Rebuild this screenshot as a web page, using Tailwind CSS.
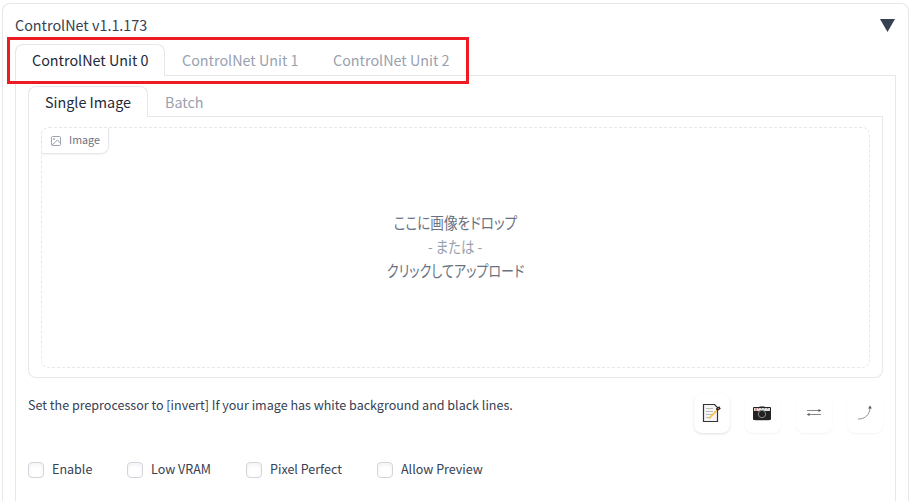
<!DOCTYPE html>
<html lang="ja">
<head>
<meta charset="utf-8">
<title>ControlNet</title>
<script src="https://cdn.jsdelivr.net/npm/@tailwindcss/browser@4"></script>
</head>
<body class="relative h-[501px] w-[914px] overflow-hidden bg-white pt-[3px] font-['Noto_Sans_CJK_JP',sans-serif] text-gray-700">
<div class="ml-[2px] h-[498px] w-[907px] rounded-t-lg border border-b-0 border-gray-200 px-3">
  <!-- accordion header -->
  <div class="flex h-10 items-center justify-between pt-0.5">
    <span class="whitespace-nowrap text-[14.35px] leading-5">ControlNet v1.1.173</span>
    <svg class="mr-px h-[13px] w-[15px]" viewBox="0 0 15 13"><path d="M0 0H15L7.5 13Z" fill="#374151"/></svg>
  </div>
  <!-- unit tabs -->
  <div class="flex h-8 w-[881px] whitespace-nowrap text-[14.35px] leading-8">
    <div class="w-[150px] rounded-t-lg border border-b-0 border-gray-200 pl-4 leading-[30px] text-gray-800">ControlNet Unit 0</div>
    <div class="w-[150px] border-b border-gray-200 pl-[17px] text-gray-400">ControlNet Unit 1</div>
    <div class="flex-1 border-b border-gray-200 pl-[18px] text-gray-400">ControlNet Unit 2</div>
  </div>
  <div class="h-[425px] w-[881px] border-x border-gray-200 px-3 pt-[10px]">
    <!-- image tabs -->
    <div class="flex h-[31px] whitespace-nowrap text-[14.35px] leading-8">
      <div class="w-[120px] rounded-t-lg border border-b-0 border-gray-200 pl-4 leading-[30px] text-gray-800">Single Image</div>
      <div class="flex-1 border-b border-gray-200 pl-[17px] text-gray-400">Batch</div>
    </div>
    <div class="h-[261px] rounded-b-lg border border-t-0 border-gray-200 px-3 pt-[10px]">
      <div class="h-[241px] w-[829px] rounded-lg border border-dashed border-gray-200">
        <div class="flex h-[26px] w-[67px] items-center rounded-br-lg border-b border-r border-gray-200 pl-[9px] text-[10.7px] text-gray-500 shadow-xs">
          <svg class="mr-2 h-[10px] w-[10px]" viewBox="0 0 10 10" fill="none" stroke="#9ca3af"><rect x=".5" y=".5" width="9" height="9" rx="1"/><circle cx="3" cy="3" r=".6"/><path d="M1 9L6.2 4.2L9.5 7"/></svg>
          <span>Image</span>
        </div>
        <div class="mt-[56px] flex flex-col items-center text-[15.5px] leading-6 text-gray-500 [font-feature-settings:'palt']">
          <span class="scale-x-[0.876]">ここに画像をドロップ</span>
          <span class="scale-x-[0.87] text-gray-400">- または -</span>
          <span class="scale-x-[0.842]">クリックしてアップロード</span>
        </div>
      </div>
    </div>
    <div class="mt-4 flex h-[39px] justify-between">
      <span class="mt-px whitespace-nowrap text-[12.54px] leading-5">Set the preprocessor to [invert] If your image has white background and black lines.</span>
      <div class="flex gap-[15px]">
        <div class="flex h-[39px] w-9 items-center justify-center rounded-lg bg-white pb-px pr-0.5 shadow-sm">
          <svg class="h-5 w-5" viewBox="0 0 20 20"><path d="M2.5 1.5H13.5L16.5 4.5V18.5H2.5Z" fill="#f5f5f5" stroke="#333" stroke-width="1.2"/><path d="M5 5.5H12M5 8.5H12M5 11.5H11M5 14.5H9" stroke="#bbb"/><path d="M8 15.5L17 6" stroke="#f8c146" stroke-width="1.8"/><path d="M15.6 6.8L19 4.5" stroke="#222" stroke-width="2.8"/><path d="M16.8 5l1 1" stroke="#e88983"/></svg>
        </div>
        <div class="flex h-[39px] w-9 items-center justify-center rounded-lg pb-0.5 pr-0.5 shadow-xs">
          <svg class="h-5 w-5" viewBox="0 0 20 20"><path d="M7.5 3h5v1.5h-5z" fill="#888"/><rect x="1" y="4" width="18" height="13" rx="1" fill="#222"/><path d="M2 5H18V8H2z" fill="#ddd"/><path d="M4 5v3" stroke="#e67970" stroke-width="1.5"/><path d="M6 5h1m2 0h1m2 0h1m2 0h1" stroke="#333"/><circle cx="10" cy="11" r="3.7" fill="#222" stroke="#888"/><path d="M3 17.5H17" stroke="#ccc"/></svg>
        </div>
        <div class="flex h-[39px] w-9 items-center justify-center rounded-lg pb-[3px] shadow-xs">
          <svg class="h-5 w-5" viewBox="0 0 20 20"><path d="M3 8.5H16M4 12.5H17" stroke="#888"/><path d="M14.5 7L17.3 8.5L14.5 10ZM5.5 11L2.7 12.5L5.5 14Z" fill="#555"/></svg>
        </div>
        <div class="flex h-[39px] w-9 items-center justify-center rounded-lg pb-[3px] shadow-xs">
          <svg class="h-5 w-5" viewBox="0 0 20 20"><path d="M3 17C10 17.3 15 12.5 15 5.5" fill="none" stroke="#888" stroke-width=".9"/><path d="M13.2 6.5L15 3.5L16.8 6.5Z" fill="#555"/></svg>
        </div>
      </div>
    </div>
    <!-- options -->
    <div class="mt-[27px] flex h-5 items-center whitespace-nowrap text-[12.54px] leading-[18px]">
      <label class="flex w-[99px] items-center gap-2"><span class="h-4 w-4 rounded border border-gray-300 shadow-inner"></span><span class="pb-0.5">Enable</span></label>
      <label class="flex w-[119px] items-center gap-2"><span class="h-4 w-4 rounded border border-gray-300 shadow-inner"></span><span class="pb-0.5">Low VRAM</span></label>
      <label class="flex w-[131px] items-center gap-2"><span class="h-4 w-4 rounded border border-gray-300 shadow-inner"></span><span class="pb-0.5">Pixel Perfect</span></label>
      <label class="flex items-center gap-2"><span class="h-4 w-4 rounded border border-gray-300 shadow-inner"></span><span class="pb-0.5">Allow Preview</span></label>
    </div>
  </div>
</div>
<!-- highlight over the unit tabs -->
<div class="absolute left-[7px] top-[37px] h-[47px] w-[462px] border-3 border-[#ed1c24]"></div>
</body>
</html>
